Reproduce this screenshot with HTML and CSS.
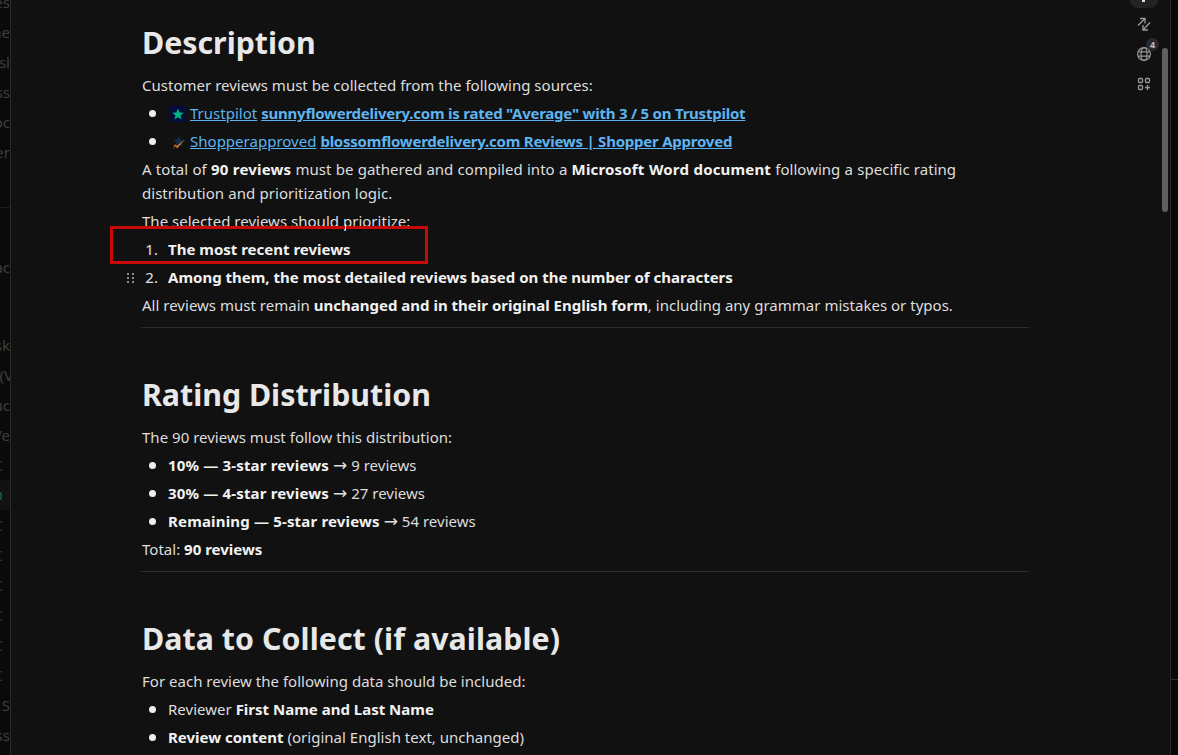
FILE: index.html
```html
<!DOCTYPE html>
<html lang="en">
<head>
<meta charset="utf-8">
<title>Description</title>
<link rel="stylesheet" href="styles.css">
</head>
<body>
<div class="app">
  <aside class="side">
    <div class="side-upper">
      <span>es</span><span>ne</span><span>asl</span><span>ss</span><span>oc</span><span>er</span>
    </div>
    <div class="side-lower">
      <span class="gap">ac</span><span class="gap2">sk</span><span class="clip">(V</span><span>uc</span><span>Ve</span><span class="tail">C</span>
      <span class="active">O</span>
      <span class="tail">C</span><span class="tail">C</span><span class="tail">C</span><span class="tail">C</span><span class="tail">C</span><span class="tail">C</span>
      <span class="last">l S</span><span>iss</span>
    </div>
  </aside>
  <main class="main">
    <article class="doc">
      <h1>Description</h1>
      <p>Customer reviews must be collected from the following sources:</p>
      <ul>
        <li><svg class="fav" viewBox="0 0 16 16"><rect width="16" height="16" fill="#000d3d"/><path d="M8 2.500l1.600 3.900 4.100.3-3.200 2.700 1 4.100L8 11.300l-3.500 2.200 1-4.100-3.200-2.700 4.100-.3z" fill="#00b67a"/></svg><a href="#">Trustpilot</a> <a href="#" class="strong">sunnyflowerdelivery.com is rated "Average" with 3 / 5 on Trustpilot</a></li>
        <li><svg class="fav" viewBox="0 0 16 16"><path d="M9 1l1.500 4.500 5 .2-3.900 2.900 1.300 4.700L9 10.600l-3.900 2.700 1.300-4.700-3.900-2.900 5-.2z" fill="#0f2c45"/><path d="M3 15l2-5 1.500 2L15 5.500 7 14.500 5.500 12z" fill="#e8701a"/></svg><a href="#">Shopperapproved</a> <a href="#" class="strong">blossomflowerdelivery.com Reviews | Shopper Approved</a></li>
      </ul>
      <p class="spaced">A total of <b class="wide">90 reviews</b> must be gathered and compiled into a <b class="wide">Microsoft Word document</b> following a specific rating<br>distribution and prioritization logic.</p>
      <p>The selected reviews should prioritize:</p>
      <ol>
        <li><b>The most recent reviews</b></li>
        <li><span class="handle" aria-hidden="true"><i></i><i></i><i></i><i></i><i></i><i></i></span><b>Among them, the most detailed reviews based on the number of characters</b></li>
      </ol>
      <p>All reviews must remain <b>unchanged and in their original English form</b>, including any grammar mistakes or typos.</p>
      <hr>
      <h1>Rating Distribution</h1>
      <p>The 90 reviews must follow this distribution:</p>
      <ul>
        <li><b class="wide">10% — 3-star reviews</b> <span class="arrow">→</span> 9 reviews</li>
        <li><b class="wide">30% — 4-star reviews</b> <span class="arrow">→</span> 27 reviews</li>
        <li><b class="wide">Remaining — 5-star reviews</b> <span class="arrow">→</span> 54 reviews</li>
      </ul>
      <p>Total: <b>90 reviews</b></p>
      <hr>
      <h1 class="wide">Data to Collect (if available)</h1>
      <p>For each review the following data should be included:</p>
      <ul>
        <li>Reviewer <b>First Name and Last Name</b></li>
        <li><b>Review content</b> (original English text, unchanged)</li>
      </ul>
    </article>
    <nav class="rail">
      <div class="rail-top"></div>
      <svg class="ico" viewBox="0 0 16 16"><path d="M2 9.500L9 2.500M4 2.500H9V7.500M14 6.500L7 14M12 14H7V9" fill="none" stroke="#9a9a9a" stroke-width="1.300"/></svg>
      <div class="globe">
        <svg class="ico" viewBox="0 0 16 16"><g fill="none" stroke="#969696" stroke-width="1.200"><circle cx="8" cy="8" r="6.400"/><ellipse cx="8" cy="8" rx="3" ry="6.400"/><path d="M2.200 5.800h11.600M2.200 10.200h11.600"/></g></svg>
        <span class="badge">4</span>
      </div>
      <svg class="ico" viewBox="0 0 16 16"><g fill="none" stroke="#969696" stroke-width="1.300"><rect x="2.500" y="2.500" width="4" height="4" rx="1"/><rect x="9.500" y="2.500" width="4" height="4" rx="1"/><rect x="2.500" y="9.500" width="4" height="4" rx="1"/><path d="M11.500 9v5M9 11.500h5"/></g></svg>
    </nav>
    <div class="scroll-thumb"></div>
    <div class="annotation"></div>
    <div class="caret"></div>
  </main>
  <aside class="strip"><div class="strip-top"></div></aside>
</div>
</body>
</html>
```
FILE: styles.css
```css
* { box-sizing: border-box; }
html, body { margin: 0; height: 100%; overflow: hidden; background: #111; }
body { font-family: "Noto Sans", "Open Sans", sans-serif; font-size: 15px; color: #dedede; }
.app { display: flex; height: 755px; }

.side { width: 11px; flex: none; background: #0a0a0a; border-right: 1px solid #2a2a2a; overflow: hidden; color: #3e3e3e; font-size: 15px; }
.side-upper, .side-lower { display: flex; flex-direction: column; align-items: flex-end; }
.side-upper { height: 208px; border-bottom: 1px solid #1c1c1c; }
.side span { display: block; height: 30px; line-height: 30px; white-space: nowrap; width: 60px; text-align: right; flex: none; }
.side-upper span:first-child { margin-top: -13px; }
.side-lower .gap { margin-top: 44px; }
.side-lower .gap2 { margin-top: 48px; }
.side-lower .clip { margin-right: -3px; }
.side-lower .tail { padding-right: 7px; color: #333; }
.side-lower .active { color: #17694a; background: #121212; padding-right: 7px; }
.side-lower .last { margin-top: 0; }

.main { flex: 1; position: relative; display: flex; min-width: 0; background: #111; }
.doc { width: 888px; margin-left: 130px; padding-top: 23px; line-height: 24px; letter-spacing: .015px; }
.doc h1 { margin: 0 0 10px 1px; font-size: 30.3px; line-height: 40px; font-weight: 700; color: #e8e8e8; letter-spacing: 0; }
.doc h1.wide { letter-spacing: .07px; }
.doc p { margin: 0 0 4px 1px; }
.doc p.spaced { word-spacing: .35px; }
.doc ul, .doc ol { margin: 0; padding: 0 0 0 27px; list-style: none; counter-reset: step; }
.doc li { margin: 0 0 4px; position: relative; counter-increment: step; }
.doc ul > li::before { content: ""; position: absolute; left: -19px; top: 9px; width: 7px; height: 7px; border-radius: 50%; background: #eee; }
.doc ol > li::before { content: counter(step) "."; position: absolute; left: -24px; width: 14px; text-align: right; font-size: 15px; color: #e2e2e2; }
.doc b { font-weight: 700; color: #f2f2f2; letter-spacing: 0; }
.doc b.wide { letter-spacing: .17px; }
.doc a { color: #5db4f0; text-decoration: underline; }
.doc a.strong { font-weight: 700; letter-spacing: -.23px; }
.doc hr { border: 0; border-top: 1px solid #2c2c2c; margin: 10px 0 47px; }
.arrow { font-family: "DejaVu Sans", sans-serif; font-size: 17px; line-height: 0; }
.fav { width: 16px; height: 16px; vertical-align: -3px; margin: 0 4px 0 2px; }
.handle { position: absolute; left: -41px; top: 8px; width: 7px; display: grid; grid-template-columns: 2px 2px; gap: 2px 3px; }
.handle i { width: 2px; height: 2px; background: #8a8a8a; }

.rail { position: absolute; left: 1119px; top: 0; width: 28px; display: flex; flex-direction: column; align-items: center; gap: 14px; }
.rail-top { position: relative; width: 28px; height: 8px; margin-bottom: -6px; background: #232323; border-radius: 0 0 8px 8px; }
.rail-top::after { content: ""; position: absolute; left: 12px; top: 0; width: 3px; height: 2px; background: #ddd; }
.ico { width: 16px; height: 16px; display: block; }
.globe { position: relative; }
.badge { position: absolute; left: 10px; top: -8px; width: 13px; height: 13px; border-radius: 50%; background: #2a2a2a; color: #c0c0c0; font-size: 9px; line-height: 13px; text-align: center; font-weight: 700; letter-spacing: 0; }

.scroll-thumb { position: absolute; left: 1151px; top: 48px; width: 6px; height: 164px; border-radius: 3px; background: #5f5f5f; }
.annotation { position: absolute; left: 99px; top: 226px; width: 318px; height: 38px; border: 3px solid #c90808; }
.caret { position: absolute; left: 334px; top: 224px; width: 1px; height: 6px; background: #eee; }

.strip { width: 8px; flex: none; background: #080808; border-left: 1px solid #2a2a2a; }
.strip-top { height: 680px; border-bottom: 1px solid #2e2e2e; }
```
